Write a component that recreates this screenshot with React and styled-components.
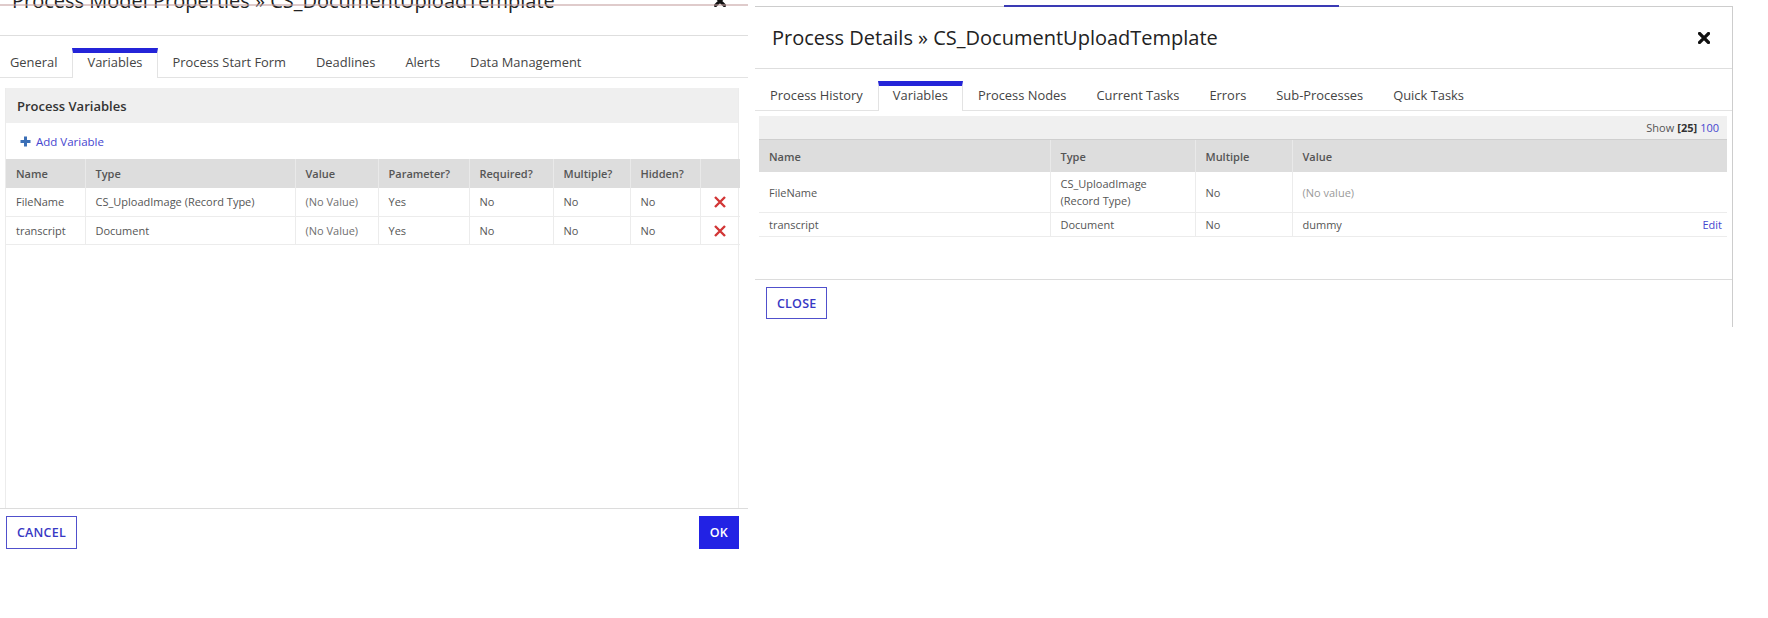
import React from 'react';
import styled, { createGlobalStyle, css } from 'styled-components';

const GlobalStyle = createGlobalStyle`
  html, body {
    margin: 0;
    padding: 0;
    background: #fff;
  }
  body {
    font-family: 'Open Sans', 'Liberation Sans', sans-serif;
    color: #444;
    overflow: hidden;
  }
  * {
    box-sizing: border-box;
  }
`;

const Screen = styled.div`
  position: relative;
  display: flex;
  align-items: flex-start;
  width: 1768px;
  height: 618px;
  overflow: hidden;
  background: #fff;
`;

// thin leftovers of the page behind the two modals
const EdgeLine = styled.div`
  position: absolute;
  top: ${p => p.$top}px;
  left: ${p => p.$left}px;
  width: ${p => p.$width}px;
  height: 2px;
  background: ${p => p.$color};
  z-index: 2;
`;

const Dialog = styled.section`
  flex: none;
  display: flex;
  flex-direction: column;
  width: ${p => p.$width}px;
  margin: ${p => p.$top}px 0 0 ${p => p.$left}px;
  background: #fff;
  ${p => p.$framed && css`
    border-top: 1px solid #cdcdcd;
    border-right: 1px solid #cdcdcd;
  `}
`;

const Header = styled.header`
  display: flex;
  align-items: center;
  justify-content: space-between;
  height: 62px;
  padding: 0 22px ${p => p.$lift || 0}px 17px;
  border-bottom: 1px solid #dedede;
`;

const Title = styled.h1`
  margin: 0;
  font-size: 20px;
  font-weight: 400;
  color: #222;
  white-space: nowrap;
`;

const CloseIcon = () => (
  <svg width="12" height="12" viewBox="0 0 12 12">
    <path d="M1.5 1.5 L10.5 10.5 M10.5 1.5 L1.5 10.5" stroke="#111" strokeWidth="3.2" strokeLinecap="square" />
  </svg>
);

const TabBar = styled.nav`
  display: flex;
  align-items: flex-end;
  height: 42px;
  border-bottom: 1px solid #e3e3e3;
`;

const Tab = styled.div`
  height: 29px;
  padding: 0 14px;
  border: 1px solid transparent;
  border-top: 5px solid transparent;
  border-bottom: none;
  font-size: 12.9px;
  line-height: 18px;
  color: #444;
  white-space: nowrap;
  ${p => p.$active && css`
    height: 30px;
    margin-bottom: -1px;
    border-color: #e3e3e3;
    border-top-color: #2424d8;
    background: #fff;
  `}
`;

const Body = styled.div`
  display: flex;
  flex-direction: column;
  height: ${p => p.$height}px;
  padding: ${p => p.$pad};
`;

const Footer = styled.footer`
  display: flex;
  justify-content: space-between;
  align-items: flex-start;
  padding: 7px 9px 8px 11px;
  border-top: 1px solid #dcdcdc;
`;

const Button = styled.button`
  height: ${p => p.$h || 33}px;
  padding: 0 10px;
  font-family: inherit;
  font-size: 12.5px;
  font-weight: 600;
  letter-spacing: 0.2px;
  color: #3838c4;
  background: #fff;
  border: 1px solid #5050cc;
  border-radius: 0;
  ${p => p.$primary && css`
    background: #2222e4;
    border-color: #2222e4;
    color: #fff;
  `}
`;

/* ---------- left modal: process model properties ---------- */

const Panel = styled.div`
  flex: 1;
  display: flex;
  flex-direction: column;
  border-left: 1px solid #ececec;
  border-right: 1px solid #ececec;
`;

const PanelTitle = styled.div`
  height: 35px;
  padding-left: 11px;
  display: flex;
  align-items: center;
  background: #efefef;
  font-size: 13px;
  font-weight: 600;
  color: #333;
`;

const AddLink = styled.div`
  height: 36px;
  display: flex;
  align-items: center;
  gap: 5px;
  padding-left: 14px;
  font-size: 11.5px;
  color: #4646cf;
`;

const PlusIcon = () => (
  <svg width="11" height="11" viewBox="0 0 11 11">
    <path d="M5.5 0.5 V10.5 M0.5 5.5 H10.5" stroke="#3b6fb6" strokeWidth="3" />
  </svg>
);

const DeleteIcon = () => (
  <svg width="12" height="12" viewBox="0 0 12 12">
    <path d="M1 1 L11 11 M11 1 L1 11" stroke="#d23636" strokeWidth="2.4" />
  </svg>
);

const Table = styled.table`
  width: 100%;
  border-collapse: collapse;
  table-layout: fixed;
  font-size: 11px;
`;

const Th = styled.th`
  height: ${p => p.$h}px;
  padding: 0 10px;
  text-align: left;
  font-weight: 600;
  color: #555;
  background: #dddddd;
  border-left: 1px solid #e9e9e9;
  white-space: nowrap;
  &:first-child {
    border-left: none;
  }
`;

const Td = styled.td`
  height: ${p => p.$h}px;
  padding: ${p => (p.$wrap ? '3px 10px' : '0 10px')};
  line-height: 17px;
  color: ${p => (p.$muted ? p.$muted : '#555')};
  text-align: ${p => (p.$center ? 'center' : 'left')};
  border-left: 1px solid #ececec;
  border-bottom: 1px solid #ececec;
  vertical-align: middle;
  &:first-child {
    border-left: none;
  }
`;

const IconCell = styled(Td)`
  padding: 4px 0 0;
`;

/* ---------- right modal: process details ---------- */

const ShowBar = styled.div`
  height: 24px;
  display: flex;
  align-items: center;
  justify-content: flex-end;
  gap: 3px;
  padding-right: 8px;
  background: #f0f0f0;
  border-bottom: 1px solid #cfcfcf;
  font-size: 11px;
  color: #555;
`;

const Strong = styled.b`
  color: #333;
  font-weight: 700;
`;

const Link = styled.span`
  color: #4646cf;
`;

const ValueCell = styled.div`
  display: flex;
  justify-content: space-between;
  margin-right: -5px;
`;

const leftVars = [
  { name: 'FileName', type: 'CS_UploadImage (Record Type)' },
  { name: 'transcript', type: 'Document' },
];

const rightVars = [
  { name: 'FileName', type: 'CS_UploadImage (Record Type)', value: null, h: 40 },
  { name: 'transcript', type: 'Document', value: 'dummy', h: 24 },
];

const leftTabs = ['General', 'Variables', 'Process Start Form', 'Deadlines', 'Alerts', 'Data Management'];
const rightTabs = ['Process History', 'Variables', 'Process Nodes', 'Current Tasks', 'Errors', 'Sub-Processes', 'Quick Tasks'];

const ModelProperties = () => (
  <Dialog $width={753} $top={-26} $left={-5}>
    <Header $lift={8}>
      <Title>Process Model Properties » CS_DocumentUploadTemplate</Title>
      <CloseIcon />
    </Header>
    <TabBar>
      {leftTabs.map(t => (
        <Tab key={t} $active={t === 'Variables'}>{t}</Tab>
      ))}
    </TabBar>
    <Body $height={430} $pad="10px 9px 0 10px">
      <Panel>
        <PanelTitle>Process Variables</PanelTitle>
        <AddLink>
          <PlusIcon />
          Add Variable
        </AddLink>
        <Table>
          <colgroup>
            <col style={{ width: 79 }} />
            <col style={{ width: 210 }} />
            <col style={{ width: 83 }} />
            <col style={{ width: 91 }} />
            <col style={{ width: 84 }} />
            <col style={{ width: 77 }} />
            <col style={{ width: 70 }} />
            <col style={{ width: 40 }} />
          </colgroup>
          <thead>
            <tr>
              <Th $h={29}>Name</Th>
              <Th $h={29}>Type</Th>
              <Th $h={29}>Value</Th>
              <Th $h={29}>Parameter?</Th>
              <Th $h={29}>Required?</Th>
              <Th $h={29}>Multiple?</Th>
              <Th $h={29}>Hidden?</Th>
              <Th $h={29} />
            </tr>
          </thead>
          <tbody>
            {leftVars.map(v => (
              <tr key={v.name}>
                <Td $h={28}>{v.name}</Td>
                <Td $h={28}>{v.type}</Td>
                <Td $h={28} $muted="#6f6f6f">(No Value)</Td>
                <Td $h={28}>Yes</Td>
                <Td $h={28}>No</Td>
                <Td $h={28}>No</Td>
                <Td $h={28}>No</Td>
                <IconCell $h={28} $center>
                  <DeleteIcon />
                </IconCell>
              </tr>
            ))}
          </tbody>
        </Table>
      </Panel>
    </Body>
    <Footer>
      <Button>CANCEL</Button>
      <Button $primary>OK</Button>
    </Footer>
  </Dialog>
);

const ProcessDetails = () => (
  <Dialog $width={978} $top={6} $left={7} $framed>
    <Header>
      <Title>Process Details » CS_DocumentUploadTemplate</Title>
      <CloseIcon />
    </Header>
    <TabBar>
      {rightTabs.map(t => (
        <Tab key={t} $active={t === 'Variables'}>{t}</Tab>
      ))}
    </TabBar>
    <Body $height={168} $pad="5px 5px 0 4px">
      <ShowBar>
        Show <Strong>[25]</Strong> <Link>100</Link>
      </ShowBar>
      <Table>
        <colgroup>
          <col style={{ width: 291 }} />
          <col style={{ width: 145 }} />
          <col style={{ width: 97 }} />
          <col />
        </colgroup>
        <thead>
          <tr>
            <Th $h={32}>Name</Th>
            <Th $h={32}>Type</Th>
            <Th $h={32}>Multiple</Th>
            <Th $h={32}>Value</Th>
          </tr>
        </thead>
        <tbody>
          {rightVars.map(v => (
            <tr key={v.name}>
              <Td $h={v.h} $wrap>{v.name}</Td>
              <Td $h={v.h} $wrap>{v.type}</Td>
              <Td $h={v.h} $wrap>No</Td>
              <Td $h={v.h} $wrap $muted={v.value ? null : '#9a9a9a'}>
                {v.value ? (
                  <ValueCell>
                    <span>{v.value}</span>
                    <Link>Edit</Link>
                  </ValueCell>
                ) : (
                  '(No value)'
                )}
              </Td>
            </tr>
          ))}
        </tbody>
      </Table>
    </Body>
    <Footer>
      <Button $h={32}>CLOSE</Button>
    </Footer>
  </Dialog>
);

const App = () => (
  <>
    <GlobalStyle />
    <Screen>
      <EdgeLine $top={4} $left={0} $width={748} $color="rgba(196, 160, 160, 0.55)" />
      <EdgeLine $top={5} $left={1004} $width={335} $color="#3a3ab4" />
      <ModelProperties />
      <ProcessDetails />
    </Screen>
  </>
);

export default App;
